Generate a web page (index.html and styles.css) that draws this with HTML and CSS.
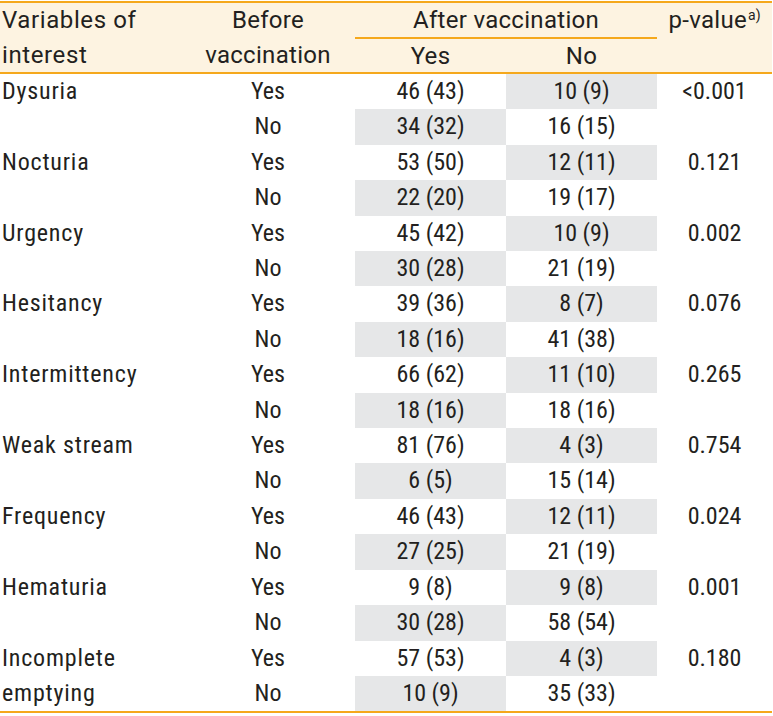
FILE: index.html
```html
<!DOCTYPE html>
<html lang="en">
<head>
<meta charset="utf-8">
<title>Symptoms before and after vaccination</title>
<link rel="stylesheet" href="styles.css">
</head>
<body>
<div class="wrap">
<table class="tbl">
  <colgroup>
    <col class="c-var"><col class="c-before"><col class="c-yes"><col class="c-no"><col class="c-p">
  </colgroup>
  <thead>
    <tr class="h1">
      <th rowspan="2" class="th-var">Variables of<br>interest</th>
      <th rowspan="2" class="th-before">Before<br>vaccination</th>
      <th colspan="2" class="th-after">After vaccination</th>
      <th rowspan="2" class="th-p">p-value<sup>a)</sup></th>
    </tr>
    <tr class="h2">
      <th class="th-sub">Yes</th>
      <th class="th-sub">No</th>
    </tr>
  </thead>
  <tbody>
    <tr><td rowspan="2" class="var">Dysuria</td><td>Yes</td><td>46 (43)</td><td class="g">10 (9)</td><td rowspan="2" class="p">&lt;0.001</td></tr>
    <tr><td>No</td><td class="g">34 (32)</td><td>16 (15)</td></tr>
    <tr><td rowspan="2" class="var">Nocturia</td><td>Yes</td><td>53 (50)</td><td class="g">12 (11)</td><td rowspan="2" class="p">0.121</td></tr>
    <tr><td>No</td><td class="g">22 (20)</td><td>19 (17)</td></tr>
    <tr><td rowspan="2" class="var">Urgency</td><td>Yes</td><td>45 (42)</td><td class="g">10 (9)</td><td rowspan="2" class="p">0.002</td></tr>
    <tr><td>No</td><td class="g">30 (28)</td><td>21 (19)</td></tr>
    <tr><td rowspan="2" class="var">Hesitancy</td><td>Yes</td><td>39 (36)</td><td class="g">8 (7)</td><td rowspan="2" class="p">0.076</td></tr>
    <tr><td>No</td><td class="g">18 (16)</td><td>41 (38)</td></tr>
    <tr><td rowspan="2" class="var">Intermittency</td><td>Yes</td><td>66 (62)</td><td class="g">11 (10)</td><td rowspan="2" class="p">0.265</td></tr>
    <tr><td>No</td><td class="g">18 (16)</td><td>18 (16)</td></tr>
    <tr><td rowspan="2" class="var">Weak stream</td><td>Yes</td><td>81 (76)</td><td class="g">4 (3)</td><td rowspan="2" class="p">0.754</td></tr>
    <tr><td>No</td><td class="g">6 (5)</td><td>15 (14)</td></tr>
    <tr><td rowspan="2" class="var">Frequency</td><td>Yes</td><td>46 (43)</td><td class="g">12 (11)</td><td rowspan="2" class="p">0.024</td></tr>
    <tr><td>No</td><td class="g">27 (25)</td><td>21 (19)</td></tr>
    <tr><td rowspan="2" class="var">Hematuria</td><td>Yes</td><td>9 (8)</td><td class="g">9 (8)</td><td rowspan="2" class="p">0.001</td></tr>
    <tr><td>No</td><td class="g">30 (28)</td><td>58 (54)</td></tr>
    <tr><td rowspan="2" class="var">Incomplete emptying</td><td>Yes</td><td>57 (53)</td><td class="g">4 (3)</td><td rowspan="2" class="p">0.180</td></tr>
    <tr><td>No</td><td class="g">10 (9)</td><td>35 (33)</td></tr>
  </tbody>
</table>
</div>
</body>
</html>
```

FILE: styles.css
```css
html, body {
  margin: 0;
  padding: 0;
  background: #ffffff;
}

.wrap {
  padding-top: 1px;
  width: 772px;
}

.tbl {
  width: 772px;
  table-layout: fixed;
  border-collapse: separate;
  border-spacing: 0;
  border-top: 2px solid #f5a81c;
  border-bottom: 2px solid #f5a81c;
  font-family: Roboto, "Liberation Sans", sans-serif;
  font-size: 24px;
  font-stretch: 87%;
  font-weight: 380;
  color: #231f20;
}

.c-var { width: 181px; }
.c-before { width: 174px; }
.c-yes { width: 151px; }
.c-no { width: 151px; }
.c-p { width: 115px; }

.tbl th {
  font-weight: 380;
  font-stretch: 100%;
  background: #fdf3e1;
  padding: 0;
  line-height: 34.5px;
  vertical-align: top;
  text-align: center;
  letter-spacing: 0.3px;
}

.h1 { height: 36px; }
.h2 { height: 35px; }

.tbl th.th-var,
.tbl th.th-before,
.tbl th.th-p,
.tbl th.th-sub,
.tbl th.th-after {
  border-bottom: 2px solid #f5a81c;
}

.tbl th.th-var {
  text-align: left;
  padding-left: 2px;
  letter-spacing: 0.6px;
}

.tbl th.th-after {
  line-height: 34px;
}

.tbl th.th-sub {
  padding-top: 2px;
  line-height: 31px;
}

.th-p sup {
  font-size: 14px;
  letter-spacing: 0;
  vertical-align: top;
  line-height: 1;
  position: relative;
  top: 5px;
  margin-left: 1px;
}

.tbl td {
  padding: 0;
  height: 35.4px;
  line-height: 35.4px;
  text-align: center;
  vertical-align: top;
  white-space: nowrap;
}

.tbl td.var {
  text-align: left;
  padding-left: 2px;
  white-space: normal;
  width: 110px;
  letter-spacing: 0.8px;
}

.tbl td.g {
  background: #e6e7e8;
}
```
